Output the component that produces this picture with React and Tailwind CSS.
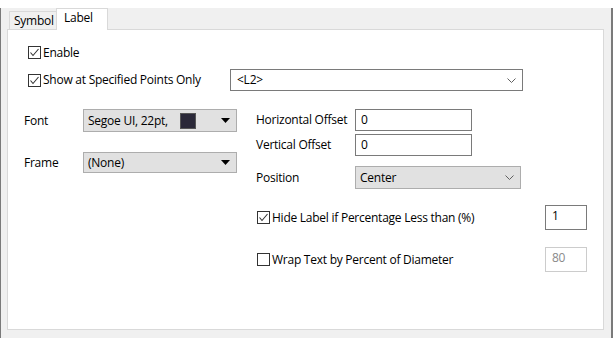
function Check({ checked }) {
  return (
    <span className="w-[13px] h-[13px] border border-[#333333] bg-white flex items-center justify-center shrink-0">
      {checked && (
        <svg width="11" height="11" viewBox="0 0 11 11">
          <polyline points="1.5,5.5 4,8.5 9.5,2" fill="none" stroke="#333333" strokeWidth="1.1" />
        </svg>
      )}
    </span>
  )
}

function Chevron() {
  return (
    <svg width="9" height="5" viewBox="0 0 9 5">
      <polyline points="0.5,0.5 4.5,4.5 8.5,0.5" fill="none" stroke="#606060" strokeWidth="1" />
    </svg>
  )
}

function Tri() {
  return (
    <svg width="9" height="5" viewBox="0 0 9 5">
      <polygon points="0,0 9,0 4.5,5" fill="#000000" />
    </svg>
  )
}

export default function App() {
  return (
    <div
      className="w-[613px] h-[338px] bg-[#f0f0f0] border-l border-r-2 border-b border-[#7a7a7a] text-[12px] tracking-[-0.25px] text-black"
      style={{ fontFamily: '"Open Sans", "Noto Sans", sans-serif' }}
    >
      <div className="ml-[6px] w-[597px]">
        {/* tabs */}
        <div className="flex items-end h-[21px] mt-[8px] pl-[2px] relative z-10">
          <div className="w-[47px] h-[18px] border-l border-t border-[#d9d9d9] bg-[#f0f0f0] pl-[4px] leading-[17px]">
            Symbol
          </div>
          <div className="w-[52px] h-[22px] -mb-px border-l border-t border-r border-[#d9d9d9] bg-white pl-[7px] leading-[18px]">
            Label
          </div>
        </div>

        {/* panel */}
        <div className="h-[301px] border border-[#d9d9d9] bg-white pt-[16px] pl-[16px]">
          <div className="pl-[4px] flex items-center gap-[2px] h-[13px]">
            <Check checked />
            <span>Enable</span>
          </div>

          <div className="pl-[4px] flex items-center h-[22px] mt-[10px]">
            <div className="w-[202px] flex items-center gap-[2px]">
              <Check checked />
              <span>Show at Specified Points Only</span>
            </div>
            <div className="w-[293px] h-[22px] border border-[#7a7a7a] bg-white flex items-center justify-between pl-[6px] pr-[6px]">
              <span>&lt;L2&gt;</span>
              <Chevron />
            </div>
          </div>

          <div className="flex mt-[18px]">
            {/* left column */}
            <div className="w-[213px]">
              <div className="flex items-center h-[23px]">
                <span className="w-[59px]">Font</span>
                <div className="w-[154px] h-[23px] border border-[#adadad] bg-[#e1e1e1] flex items-center pl-[4px] pr-[6px]">
                  <span>Segoe UI, 22pt,</span>
                  <span className="ml-[12px] w-[16px] h-[16px] bg-[#2a2838] border border-[#555]" />
                  <span className="ml-auto flex">
                    <Tri />
                  </span>
                </div>
              </div>
              <div className="flex items-center h-[21px] mt-[20px]">
                <span className="w-[59px]">Frame</span>
                <div className="w-[154px] h-[21px] border border-[#adadad] bg-[#e1e1e1] flex items-center pl-[4px] pr-[6px]">
                  <span>(None)</span>
                  <span className="ml-auto flex">
                    <Tri />
                  </span>
                </div>
              </div>
            </div>

            {/* right column */}
            <div className="ml-[19px] w-[331px]">
              <div className="flex items-center h-[22px]">
                <span className="w-[99px]">Horizontal Offset</span>
                <div className="w-[117px] h-[22px] border border-[#7a7a7a] bg-white pl-[5px] leading-[20px]">0</div>
              </div>
              <div className="flex items-center h-[22px] mt-[3px]">
                <span className="w-[99px]">Vertical Offset</span>
                <div className="w-[117px] h-[22px] border border-[#7a7a7a] bg-white pl-[5px] leading-[20px]">0</div>
              </div>
              <div className="flex items-center h-[23px] mt-[10px]">
                <span className="w-[99px]">Position</span>
                <div className="w-[166px] h-[23px] border border-[#adadad] bg-[#e1e1e1] flex items-center justify-between pl-[4px] pr-[6px]">
                  <span>Center</span>
                  <Chevron />
                </div>
              </div>

              <div className="flex items-center h-[25px] mt-[16px] pl-[1px]">
                <Check checked />
                <span className="ml-[2px]">Hide Label if Percentage Less than (%)</span>
                <div className="ml-auto w-[42px] h-[25px] border border-[#7a7a7a] bg-white pl-[6px] leading-[20px]">1</div>
              </div>
              <div className="flex items-center h-[25px] mt-[17px] pl-[1px]">
                <Check />
                <span className="ml-[2px]">Wrap Text by Percent of Diameter</span>
                <div className="ml-auto w-[42px] h-[25px] border border-[#cccccc] bg-white pl-[6px] leading-[20px] text-[#8a8a8a]">80</div>
              </div>
            </div>
          </div>
        </div>
      </div>
    </div>
  )
}
